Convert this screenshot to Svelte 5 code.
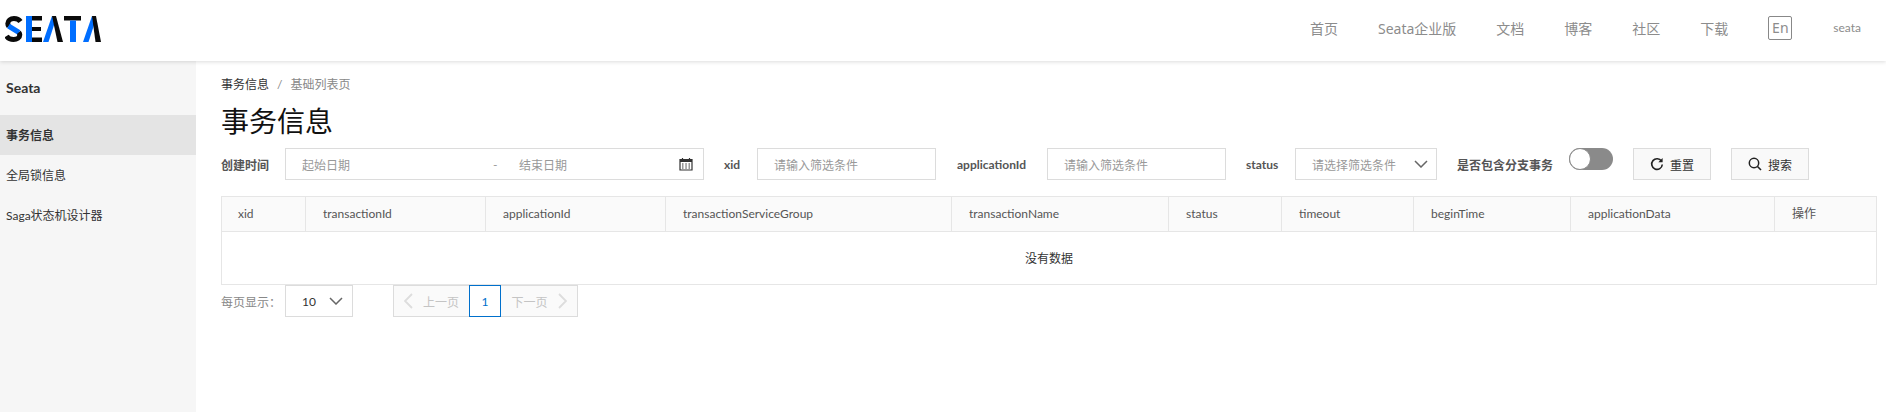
<script lang="ts">
	const nav = ['首页', 'Seata企业版', '文档', '博客', '社区', '下载'];
	const menu = ['事务信息', '全局锁信息', 'Saga状态机设计器'];
	const columns = [
		{ title: 'xid', width: 85 },
		{ title: 'transactionId', width: 180 },
		{ title: 'applicationId', width: 180 },
		{ title: 'transactionServiceGroup', width: 286 },
		{ title: 'transactionName', width: 217 },
		{ title: 'status', width: 113 },
		{ title: 'timeout', width: 132 },
		{ title: 'beginTime', width: 157 },
		{ title: 'applicationData', width: 204 },
		{ title: '操作', width: 102 }
	];
</script>

<header class="topbar">
	<svg class="logo" viewBox="0 0 96 26" width="96" height="26" aria-label="SEATA">
		<!-- S -->
		<path d="M15.500 5.500C14 3.500 11.500 2.500 9 2.500 5.500 2.500 2.800 4.500 2.800 7.500c0 1.200.4 2.100 1 2.800" fill="none" stroke="#0a0a0a" stroke-width="5"/>
		<path d="M3.500 10l10.500 6.500" fill="none" stroke="#006eff" stroke-width="5"/>
		<path d="M13.800 16.300c.6.700 1 1.500 1 2.500 0 3-2.800 4.700-6.300 4.700-3 0-5.500-1.200-7-3.500" fill="none" stroke="#0a0a0a" stroke-width="5"/>
		<!-- E -->
		<path d="M21 0h6v26h-6z" fill="#006eff"/>
		<path d="M27 0h10v4.500H27zM27 11h9v4H27zM27 21.500h10V26H27z" fill="#0a0a0a"/>
		<!-- A -->
		<path d="M38 26h5.500L50 6 47 0z" fill="#006eff"/>
		<path d="M47 0h4l7 26h-5.500z" fill="#0a0a0a"/>
		<!-- T -->
		<path d="M59 0h17v4.500H59z" fill="#0a0a0a"/>
		<path d="M65 4.500h6V26h-6z" fill="#006eff"/>
		<!-- A -->
		<path d="M78 26h5.500L90 6 87 0z" fill="#006eff"/>
		<path d="M87 0h4l5 26h-5.500z" fill="#0a0a0a"/>
	</svg>
	<nav class="nav">
		{#each nav as item}
			<span>{item}</span>
		{/each}
		<span class="lang">En</span>
		<span class="user">seata</span>
	</nav>
</header>

<div class="layout">
	<aside class="sidebar">
		<h2>Seata</h2>
		{#each menu as item, i}
			<div class="menu-item" class:active={i === 0}>{item}</div>
		{/each}
	</aside>

	<main class="content">
		<div class="breadcrumb">
			<span class="crumb">事务信息</span>
			<span class="sep">/</span>
			<span class="last">基础列表页</span>
		</div>
		<h1>事务信息</h1>

		<div class="filters">
			<span class="label date">创建时间</span>
			<div class="box range">
				<span class="ph start">起始日期</span>
				<span class="ph dash">-</span>
				<span class="ph end">结束日期</span>
				<svg class="cal" viewBox="0 0 14 14" width="14" height="14">
					<path d="M1 2.500h12v10.500H1z" fill="none" stroke="#333" stroke-width="1.200"/>
					<path d="M1 2h12v3H1z" fill="#333"/>
					<path d="M3.500 1v2M10.500 1v2" stroke="#333" stroke-width="1.200"/>
					<path d="M3 7h1.500M6.300 7h1.500M9.500 7h1.500M3 9h1.500M6.300 9h1.500M9.500 9h1.500M3 11h1.500M6.300 11h1.500M9.500 11h1.500" stroke="#333"/>
				</svg>
			</div>
			<span class="label xid">xid</span>
			<div class="box input"><span class="ph">请输入筛选条件</span></div>
			<span class="label app">applicationId</span>
			<div class="box input"><span class="ph">请输入筛选条件</span></div>
			<span class="label stat">status</span>
			<div class="box select">
				<span class="ph">请选择筛选条件</span>
				<svg viewBox="0 0 14 8" width="14" height="8"><path d="M1 1l6 6 6-6" fill="none" stroke="#666" stroke-width="1.500"/></svg>
			</div>
			<span class="label branch">是否包含分支事务</span>
			<div class="switch"><span class="knob"></span></div>
			<button class="btn reset">
				<svg viewBox="0 0 14 14" width="14" height="14"><path d="M11.500 4.200A5.300 5.300 0 1 0 12.300 7.500" fill="none" stroke="#222" stroke-width="1.600"/><path d="M12.600 1v4.300H8.300z" fill="#222"/></svg>
				重置
			</button>
			<button class="btn search">
				<svg viewBox="0 0 14 14" width="14" height="14"><circle cx="6" cy="6" r="4.700" fill="none" stroke="#222" stroke-width="1.500"/><path d="M9.500 9.500l3.500 3.500" stroke="#222" stroke-width="1.600"/></svg>
				搜索
			</button>
		</div>

		<div class="table">
			<div class="thead">
				{#each columns as col}
					<div class="th" style="width: {col.width}px">{col.title}</div>
				{/each}
			</div>
			<div class="empty">没有数据</div>
		</div>

		<div class="pager">
			<span class="size-label">每页显示：</span>
			<div class="box size">
				<span>10</span>
				<svg viewBox="0 0 14 8" width="14" height="8"><path d="M1 1l6 6 6-6" fill="none" stroke="#666" stroke-width="1.500"/></svg>
			</div>
			<div class="pages">
				<div class="page prev">
					<svg viewBox="0 0 9 16" width="9" height="16"><path d="M8 1L1 8l7 7" fill="none" stroke="#ddd" stroke-width="1.800"/></svg>
					上一页
				</div>
				<div class="page current">1</div>
				<div class="page next">
					下一页
					<svg viewBox="0 0 9 16" width="9" height="16"><path d="M1 1l7 7-7 7" fill="none" stroke="#ddd" stroke-width="1.800"/></svg>
				</div>
			</div>
		</div>
	</main>
</div>

<style>
	:global(body) {
		margin: 0;
		background: #fff;
		font-family: Lato, "Noto Sans CJK SC", sans-serif;
		font-size: 12px;
		color: #333;
	}

	.topbar {
		position: relative;
		z-index: 1;
		height: 61px;
		display: flex;
		align-items: center;
		justify-content: space-between;
		padding: 0 25px 0 5px;
		background: #fff;
		box-shadow: 0 1px 4px rgba(0, 0, 0, 0.14);
		box-sizing: border-box;
	}

	.logo {
		display: block;
		margin-top: -3px;
	}

	.nav {
		display: flex;
		align-items: center;
		gap: 40px;
		margin-top: -6px;
		font-family: "Noto Sans", "Noto Sans CJK SC", sans-serif;
		font-size: 14px;
		color: #8c8c8c;
	}

	.lang {
		width: 24px;
		height: 24px;
		line-height: 22px;
		text-align: center;
		border: 1px solid #888;
		border-radius: 2px;
		box-sizing: border-box;
	}

	.user {
		margin-left: 1px;
		font-family: Lato, sans-serif;
		font-size: 12px;
	}

	.layout {
		display: flex;
		height: 351px;
	}

	.sidebar {
		width: 196px;
		flex: none;
		background: #f6f6f6;
	}

	.sidebar h2 {
		margin: 0;
		height: 54px;
		line-height: 54px;
		padding-left: 6px;
		font-size: 14px;
		font-weight: 700;
		color: #333;
	}

	.menu-item {
		height: 40px;
		line-height: 41px;
		padding-left: 6px;
		color: #333;
	}

	.menu-item.active {
		background: #e4e4e4;
		font-weight: 700;
	}

	.content {
		flex: 1;
		padding: 16px 9px 0 25px;
		min-width: 0;
	}

	.breadcrumb {
		display: flex;
		gap: 8px;
		height: 16px;
		line-height: 16px;
	}

	.crumb {
		color: #333;
	}

	.sep,
	.last {
		color: #888;
	}

	h1 {
		margin: 8px 0 0;
		height: 47px;
		line-height: 40px;
		font-size: 28px;
		font-weight: 400;
		color: #111;
	}

	.filters {
		display: flex;
		align-items: center;
		height: 32px;
	}

	.label {
		flex: none;
		font-weight: 700;
		color: #555;
	}

	.date {
		width: 48px;
	}

	.box {
		height: 32px;
		border: 1px solid #dcdcdc;
		box-sizing: border-box;
		display: flex;
		align-items: center;
		background: #fff;
	}

	.ph {
		color: #999;
	}

	.range {
		width: 419px;
		margin-left: 16px;
		padding: 0 10px 0 16px;
	}

	.start {
		width: 191px;
	}

	.dash {
		width: 26px;
	}

	.end {
		flex: 1;
	}

	.xid {
		width: 17px;
		margin-left: 20px;
	}

	.input {
		width: 179px;
		padding-left: 16px;
		margin-left: 16px;
	}

	.app {
		width: 74px;
		margin-left: 21px;
	}

	.stat {
		width: 35px;
		margin-left: 20px;
	}

	.select {
		width: 142px;
		margin-left: 14px;
		padding: 0 8px 0 16px;
		justify-content: space-between;
	}

	.branch {
		width: 96px;
		margin-left: 20px;
	}

	.switch {
		flex: none;
		align-self: flex-start;
		width: 44px;
		height: 22px;
		margin-left: 16px;
		border-radius: 11px;
		background: #8a8a8a;
		position: relative;
	}

	.knob {
		position: absolute;
		left: 0;
		top: 0;
		width: 22px;
		height: 22px;
		border-radius: 50%;
		background: #fff;
		border: 1px solid #8a8a8a;
		box-sizing: border-box;
	}

	.btn {
		flex: none;
		width: 78px;
		height: 32px;
		margin-left: 20px;
		border: 1px solid #dcdcdc;
		background: #f9f9f9;
		color: #333;
		font: inherit;
		display: flex;
		align-items: center;
		justify-content: center;
		gap: 6px;
		padding: 0;
	}

	.table {
		margin-top: 16px;
		width: 1656px;
		border: 1px solid #e6e6e6;
		box-sizing: border-box;
	}

	.thead {
		display: flex;
		height: 35px;
		box-sizing: border-box;
		background: #fafafa;
		border-bottom: 1px solid #e6e6e6;
	}

	.th {
		flex: none;
		box-sizing: border-box;
		padding-left: 17px;
		line-height: 34px;
		border-right: 1px solid #e6e6e6;
		color: #555;
	}

	.th:first-child {
		margin-left: -1px;
	}

	.th:last-child {
		border-right: 0;
	}

	.empty {
		height: 52px;
		line-height: 54px;
		text-align: center;
		color: #333;
	}

	.pager {
		display: flex;
		align-items: center;
		height: 32px;
	}

	.size-label {
		width: 64px;
		color: #888;
	}

	.size {
		width: 68px;
		padding: 0 9px 0 16px;
		justify-content: space-between;
	}

	.pages {
		display: flex;
		margin-left: 40px;
		height: 32px;
	}

	.page {
		box-sizing: border-box;
		height: 32px;
		display: flex;
		align-items: center;
		justify-content: center;
		gap: 10px;
		border: 1px solid #dcdcdc;
		background: #fafafa;
		color: #c4c4c4;
	}

	.prev {
		width: 76px;
		border-right: 0;
	}

	.next {
		width: 77px;
		border-left: 0;
	}

	.current {
		width: 32px;
		background: #fff;
		border-color: #0070cc;
		color: #0070cc;
	}
</style>
